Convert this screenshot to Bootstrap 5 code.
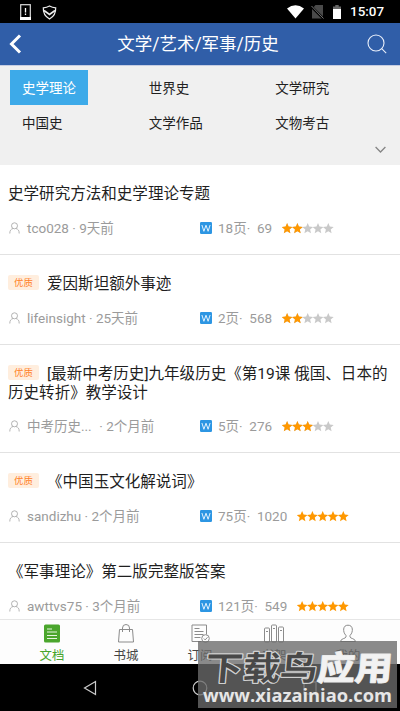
<!DOCTYPE html>
<html lang="zh-CN">
<head>
<meta charset="utf-8">
<meta name="viewport" content="width=device-width, initial-scale=1">
<title>文学/艺术/军事/历史</title>
<link href="https://cdn.jsdelivr.net/npm/bootstrap@5.3.0/dist/css/bootstrap.min.css" rel="stylesheet">
<style>
  body{font-family:Roboto,"Noto Sans CJK SC",sans-serif;background:#fff;color:#1f1f1f}
  svg{display:block;flex:none}
  .screen{width:400px;height:711px}
  .statusbar{height:23px;background:#000;padding:1px 16px 0 20px}
  .shield{margin-left:11px}
  .sim{margin-left:7px}
  .battery{margin:0 9px}
  .clock{font-size:13.4px;line-height:22px;font-weight:500}
  .titlebar{height:43px;background:#305ea8;border-bottom:1px solid #c6cde2;padding:0 13px 0 9px}
  .titlebar h1{font-size:17.5px;font-weight:400;line-height:42px;padding-left:7px}
  .cats{height:99px;background:#f0f0f0;padding:4px 10px 0}
  .cat{font-size:13.5px;line-height:36px;height:35px;padding:0 12px}
  .cat-on{background:#3daae9;color:#fff}
  .more{padding:6px 4px 0 0}
  .doc{border-bottom:1px solid #e2e2e2;padding:20px 8px 0;height:90px}
  .doc-tall{height:108px}
  .doc h2{font-size:15.55px;font-weight:400;line-height:19px;margin:0 0 13px}
  .doc-tall h2{margin-bottom:12px}
  .good{display:inline-block;width:31px;height:15px;line-height:15px;font-size:9.4px;color:#ff8127;background:#ffeede;border-radius:2px;text-align:center;margin-right:8px;vertical-align:3px}
  .meta{font-size:13.5px;line-height:22px;color:#9b9b9b}
  .who{width:192px}
  .name{margin-left:6px}
  .name-cut{width:69px}
  .count{margin:0 10px 0 6px;white-space:pre}
  .tabs{height:45px;background:#fdfdfd;border-top:1px solid #e6e6e6;padding:0 15px;font-size:12.4px;color:#444}
  .tabs svg{margin:4px auto 3px}
  .tabs span{line-height:20px}
  .tab-on{color:#47a52b}
  .keys{height:47px;background:#000;padding:0 83px}
  .stamp{left:198px;top:641px;width:199px;height:67px;background:rgba(107,107,107,.79)}
</style>
<script src="https://cdn.jsdelivr.net/npm/bootstrap@5.3.0/dist/js/bootstrap.bundle.min.js"></script>
</head>
<body>
<svg width="0" height="0" class="position-absolute" aria-hidden="true">
  <defs>
    <symbol id="person" viewBox="0 0 12 12"><g fill="none" stroke="#aaa" stroke-width=".9"><circle cx="6" cy="3.800" r="3"/><path d="M1.300 11.500c0-3 1-4.300 3.200-5M10.700 11.500c0-3-1-4.300-3.200-5"/></g></symbol>
    <symbol id="word" viewBox="0 0 12 12"><rect width="12" height="12" rx="1.200" fill="#2d96e3"/><path d="M1.900 3l2 6.300L6 3.200l2.100 6.100L10.100 3" fill="none" stroke="#e2f2ff" stroke-width="1"/></symbol>
    <path id="star" d="M5.100 0l1.500 3.600 3.900.3-3 2.500.9 3.800-3.300-2-3.300 2 .9-3.800-3-2.500 3.900-.3z"/>
    <g id="five"><use href="#star"/><use href="#star" x="10.300"/><use href="#star" x="20.600"/><use href="#star" x="30.900"/><use href="#star" x="41.200"/></g>
    <clipPath id="c2"><rect width="20.500" height="11"/></clipPath>
    <clipPath id="c3"><rect width="30.800" height="11"/></clipPath>
    <symbol id="s2" viewBox="0 0 52 11"><use href="#five" fill="#c9c9c9"/><use href="#five" fill="#ff9800" clip-path="url(#c2)"/></symbol>
    <symbol id="s3" viewBox="0 0 52 11"><use href="#five" fill="#c9c9c9"/><use href="#five" fill="#ff9800" clip-path="url(#c3)"/></symbol>
    <symbol id="s5" viewBox="0 0 52 11"><use href="#five" fill="#ff9800"/></symbol>
  </defs>
</svg>
<div class="screen position-relative overflow-hidden d-flex flex-column">
  <div class="statusbar flex-shrink-0 d-flex align-items-center text-white">
    <svg width="11" height="16" viewBox="0 0 11 16"><rect x=".7" y=".7" width="9.600" height="14.300" fill="none" stroke="#ddd" stroke-width="1.200"/><path d="M0 13h11v3H0z" fill="#fff"/><path d="M5.500 4v4.500M5.500 9.500V11" stroke="#fff" stroke-width="1.300"/></svg>
    <svg class="shield" width="15" height="15" viewBox="0 0 15 15" fill="none" stroke="#eee"><path d="M7.500 1C5.500 2.200 3.500 2.700 1.300 2.800 1 8 3 11.500 7.500 14c4.500-2.500 6.500-6 6.200-11.200C11.500 2.700 9.500 2.200 7.500 1z" stroke-width="1.200"/><path d="M2 5.500l5.500 4 5.500-4" stroke-width="1.600"/></svg>
    <div class="ms-auto d-flex align-items-center">
      <svg width="17" height="14" viewBox="0 0 17 14"><path d="M0 3.500Q8.500-2.800 17 3.500L8.500 13.500z" fill="#fff"/></svg>
      <svg class="sim" width="13" height="14" viewBox="0 0 13 14"><path d="M4.500 0H12v13.500H1V4z" fill="#4a4a4a"/><path d="M0 1.200L12.500 13.700" stroke="#000" stroke-width="2.500"/><path d="M.5 1L12.500 13.500" stroke="#777" stroke-width="1"/></svg>
      <svg class="battery" width="8" height="14" viewBox="0 0 8 14"><path d="M2.300 0h3.400v1.500H8V4H0V1.500h2.300z" fill="#666"/><path d="M0 4h8v10H0z" fill="#fff"/></svg>
      <span class="clock">15:07</span>
    </div>
  </div>
  <header class="titlebar flex-shrink-0 d-flex align-items-center justify-content-between text-white">
    <svg width="13" height="20" viewBox="0 0 13 20"><path d="M11 1.500L2.500 10l8.500 8.500" fill="none" stroke="#fff" stroke-width="3"/></svg>
    <h1 class="m-0">文学/艺术/军事/历史</h1>
    <svg width="20" height="20" viewBox="0 0 20 20" fill="none" stroke="#e9effa" stroke-width="1.100"><circle cx="9" cy="9" r="8"/><path d="M14.700 14.700l4.500 4.500"/></svg>
  </header>
  <nav class="cats flex-shrink-0">
    <div class="row g-0">
      <div class="col-4 d-flex"><div class="cat cat-on">史学理论</div></div>
      <div class="col-4 cat">世界史</div>
      <div class="col-4 cat">文学研究</div>
      <div class="col-4 cat">中国史</div>
      <div class="col-4 cat">文学作品</div>
      <div class="col-4 cat">文物考古</div>
    </div>
    <div class="more d-flex justify-content-end"><svg width="11" height="8" viewBox="0 0 11 8"><path d="M.6 1l4.900 5 4.900-5" fill="none" stroke="#858585" stroke-width="1.300"/></svg></div>
  </nav>
  <main class="flex-grow-1 overflow-hidden">
    <article class="doc">
      <h2>史学研究方法和史学理论专题</h2>
      <div class="meta d-flex align-items-center">
        <div class="who d-flex align-items-center"><svg width="13" height="12"><use href="#person"/></svg><span class="name">tco028 · 9天前</span></div>
        <svg width="12" height="12"><use href="#word"/></svg><span class="count">18页·  69</span><svg width="52" height="11"><use href="#s2"/></svg>
      </div>
    </article>
    <article class="doc">
      <h2><span class="good">优质</span>爱因斯坦额外事迹</h2>
      <div class="meta d-flex align-items-center">
        <div class="who d-flex align-items-center"><svg width="13" height="12"><use href="#person"/></svg><span class="name">lifeinsight · 25天前</span></div>
        <svg width="12" height="12"><use href="#word"/></svg><span class="count">2页·  568</span><svg width="52" height="11"><use href="#s2"/></svg>
      </div>
    </article>
    <article class="doc doc-tall">
      <h2><span class="good">优质</span>[最新中考历史]九年级历史《第19课 俄国、日本的历史转折》教学设计</h2>
      <div class="meta d-flex align-items-center">
        <div class="who d-flex align-items-center"><svg width="13" height="12"><use href="#person"/></svg><span class="name name-cut">中考历史...</span><span>&nbsp;· 2个月前</span></div>
        <svg width="12" height="12"><use href="#word"/></svg><span class="count">5页·  276</span><svg width="52" height="11"><use href="#s3"/></svg>
      </div>
    </article>
    <article class="doc">
      <h2><span class="good">优质</span>《中国玉文化解说词》</h2>
      <div class="meta d-flex align-items-center">
        <div class="who d-flex align-items-center"><svg width="13" height="12"><use href="#person"/></svg><span class="name">sandizhu · 2个月前</span></div>
        <svg width="12" height="12"><use href="#word"/></svg><span class="count">75页·  1020</span><svg width="52" height="11"><use href="#s5"/></svg>
      </div>
    </article>
    <article class="doc border-0">
      <h2>《军事理论》第二版完整版答案</h2>
      <div class="meta d-flex align-items-center">
        <div class="who d-flex align-items-center"><svg width="13" height="12"><use href="#person"/></svg><span class="name">awttvs75 · 3个月前</span></div>
        <svg width="12" height="12"><use href="#word"/></svg><span class="count">121页·  549</span><svg width="52" height="11"><use href="#s5"/></svg>
      </div>
    </article>
  </main>
  <nav class="tabs row g-0 text-center flex-shrink-0">
    <div class="col tab-on"><svg width="16" height="19" viewBox="0 0 16 19"><rect y=".5" width="16" height="18" rx="1.500" fill="#4ba62d"/><path d="M3 5h5M3 8h10M3 11.500h10M3 14.500h10" stroke="#e5f5df"/></svg><span>文档</span></div>
    <div class="col"><svg width="16" height="19" viewBox="0 0 16 19" fill="none" stroke="#8b8b8b"><path d="M1.500 5.500h13l1 12.500H.5zM4.500 8V4a3.500 3.500 0 0 1 7 0v4"/></svg><span>书城</span></div>
    <div class="col"><svg width="19" height="19" viewBox="0 0 19 19" fill="none" stroke="#8b8b8b"><path d="M10.500 17.500H1V1h14.500v9.500M3.500 4.500h5M3.500 7.500h9M3.500 10.500h9M3.500 13.500h6"/><circle cx="14.500" cy="14.500" r="3.800"/><path d="M12.800 14.500l1.400 1.400 2.300-2.600"/></svg><span>订阅</span></div>
    <div class="col"><svg width="20" height="19" viewBox="0 0 20 19" fill="none" stroke="#8b8b8b"><rect x=".5" y="4" width="5" height="14" rx="1"/><rect x="7.500" y="1" width="5" height="17" rx="1"/><rect x="14.500" y="3" width="5" height="15" rx="1"/><path d="M2 7.500h2M9 4.500h2M16 6.500h2"/></svg><span>书架</span></div>
    <div class="col"><svg width="16" height="19" viewBox="0 0 16 19" fill="none" stroke="#8b8b8b"><path d="M6 11.500C4 9.500 3.500 7 3.700 5 4 2.500 5.500 1.200 8 1.200S12 2.500 12.300 5c.2 2-.3 4.500-2.300 6.500v1.500c0 1.500 5.500 1.500 5.500 4.500H.5c0-3 5.500-3 5.500-4.500z"/></svg><span>我的</span></div>
  </nav>
  <div class="keys flex-shrink-0 d-flex align-items-center justify-content-between">
    <svg width="14" height="16" viewBox="0 0 14 16"><path d="M12.500 1.500v13L1.500 8z" fill="none" stroke="#ccc" stroke-width="1.200"/></svg>
    <svg width="16" height="16" viewBox="0 0 16 16"><circle cx="8" cy="8" r="6.800" fill="none" stroke="#ccc" stroke-width="1.200"/></svg>
    <svg width="14" height="14" viewBox="0 0 14 14"><rect x="1" y="1" width="12" height="12" fill="none" stroke="#ccc" stroke-width="1.200"/></svg>
  </div>
  <svg class="stamp position-absolute" viewBox="0 0 199 67">
    <g font-family="Noto Sans CJK SC, sans-serif" font-weight="700" font-size="33" paint-order="stroke" stroke-linejoin="round" transform="translate(10 0) skewX(-5)">
      <text x="0" y="39" textLength="112" lengthAdjust="spacingAndGlyphs" fill="#484848" stroke="#d0d0d0" stroke-width="2.400">下载鸟</text>
      <text x="112" y="39" textLength="75" lengthAdjust="spacingAndGlyphs" fill="#f2f2f2" stroke="#e8e8e8" stroke-width="1.500">应用</text>
    </g>
    <text x="5" y="60.500" textLength="189" lengthAdjust="spacingAndGlyphs" font-family="Open Sans, sans-serif" font-weight="700" font-size="17.500" fill="#e6e6e6">www.xiazainiao.com</text>
  </svg>
</div>
</body>
</html>
